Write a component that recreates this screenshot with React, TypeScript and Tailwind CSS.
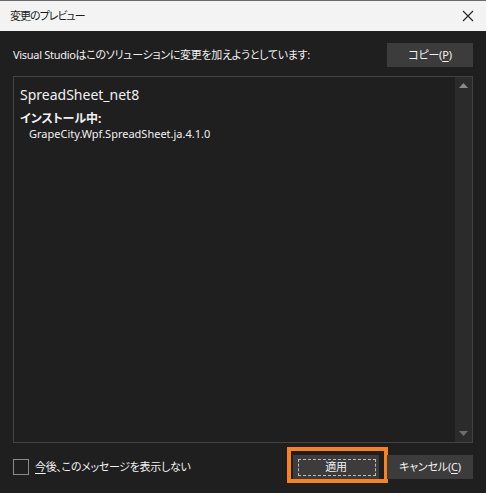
import React from "react";

const jp = "font-['Noto_Sans','Noto_Sans_CJK_JP',sans-serif] [font-feature-settings:'palt']";

const DialogButton: React.FC<{ children: React.ReactNode; focused?: boolean }> = ({ children, focused }) => {
  return (
    <div className="relative">
      <button className="relative w-[86px] h-[24px] bg-[#3c3c3c] text-[11px] tracking-[-0.2px] text-[#f1f1f1] flex items-center justify-center">
        {focused && <span className="absolute left-[5px] right-[3px] top-[4px] bottom-[3px] border border-dashed border-[#bdbdbd]" />}
        <span className="relative">{children}</span>
      </button>
      {focused && (
        <span className="absolute -left-[6px] -right-[9px] -top-[8px] -bottom-[4px] border-[4px] border-[#f7821f] pointer-events-none" />
      )}
    </div>
  );
};

export default function App() {
  return (
    <div className={`w-[486px] h-[493px] bg-[#1f1f1f] flex flex-col ${jp}`}>
      <div className="h-[31px] bg-[#f3f3f3] border-t border-[#6b6b6b] flex items-center justify-between pl-[10px] pr-[10px]">
        <span className="text-[11px] tracking-[-1px] text-[#1a1a1a]">変更のプレビュー</span>
        <svg width="12" height="12" viewBox="0 0 12 12" className="mr-[2px]">
          <path d="M1 1 L11 11 M11 1 L1 11" stroke="#222" strokeWidth="1.1" fill="none" />
        </svg>
      </div>

      <div className="flex-1 flex flex-col px-[13px] pt-[12px] pb-[14px]">
        <div className="flex items-center justify-between">
          <span className="text-[11px] tracking-[-0.3px] text-[#f1f1f1]">Visual Studioはこのソリューションに変更を加えようとしています:</span>
          <DialogButton>
            コピー(<span className="underline underline-offset-2">P</span>)
          </DialogButton>
        </div>

        <div className="mt-[9px] h-[367px] border border-[#434346] flex">
          <div className="flex-1 pl-[6px] pt-[8px] text-[#f1f1f1]">
            <div className="text-[14px] leading-[20px]">SpreadSheet_net8</div>
            <div className="mt-[7px] text-[12px] leading-[14px] font-bold">インストール中:</div>
            <div className="pl-[9px] text-[11px] leading-[15px]">GrapeCity.Wpf.SpreadSheet.ja.4.1.0</div>
          </div>
          <div className="w-[17px] bg-[#2b2b2b] flex flex-col justify-between items-center py-[6px]">
            <svg width="9" height="5" viewBox="0 0 9 5">
              <path d="M0 5 L4.5 0 L9 5 Z" fill="#8a8a8a" />
            </svg>
            <svg width="9" height="5" viewBox="0 0 9 5">
              <path d="M0 0 L4.5 5 L9 0 Z" fill="#6e6e6e" />
            </svg>
          </div>
        </div>

        <div className="mt-[12px] flex items-center justify-between">
          <label className="flex items-center gap-[6px] text-[11px] tracking-[-0.3px] text-[#f1f1f1]">
            <span className="w-[16px] h-[16px] border border-[#8a8a8a]" />
            <span>
              <span className="underline underline-offset-2">今</span>後、このメッセージを表示しない
            </span>
          </label>
          <div className="flex gap-[8px]">
            <DialogButton focused>適用</DialogButton>
            <DialogButton>
              キャンセル(<span className="underline underline-offset-2">C</span>)
            </DialogButton>
          </div>
        </div>
      </div>
    </div>
  );
}
